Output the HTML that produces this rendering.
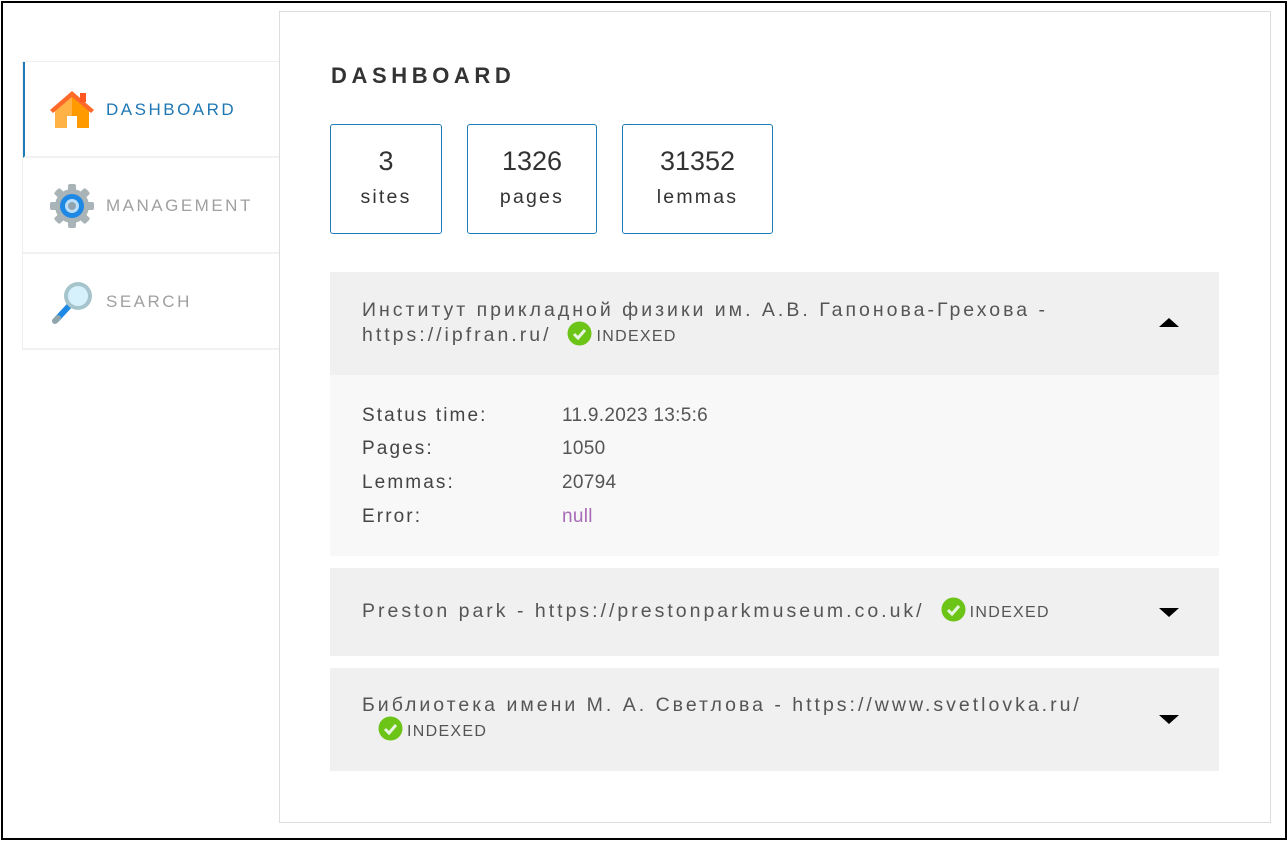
<!DOCTYPE html>
<html><head><meta charset="utf-8"><style>
*{box-sizing:border-box;margin:0;padding:0}
body{width:1288px;height:841px;background:#fff;font-family:"Liberation Sans","Noto Sans CJK SC",sans-serif;position:relative;overflow:hidden;color:#444}
.frame{position:absolute;left:1px;top:1px;width:1286px;height:839px;border:2px solid #000}
.side{position:absolute;left:22px;top:61px;width:257px;height:289px;border:1px solid #eee;border-right:none}
.item{height:96px;border-bottom:2px solid #f2f2f2;display:flex;align-items:center;padding-left:26px;font-size:17px;letter-spacing:2.5px;color:#a0a0a0;white-space:nowrap;padding-top:2px}
.item.act{border-left:2px solid #1f7ab8;color:#1f77b4;padding-left:24px}
.item svg{margin-right:11px}
.panel{position:absolute;left:279px;top:11px;width:992px;height:812px;border:1px solid #ddd}
h1{position:absolute;left:331px;top:63px;font-size:22px;letter-spacing:4.6px;color:#333;font-weight:bold}
.box{position:absolute;top:124px;height:110px;border:1px solid #1f7ab8;border-radius:3px;text-align:center;color:#333}
.box b{display:block;font-weight:normal;font-size:27px;margin-top:21px}
.box span{display:block;font-size:19.5px;margin-top:9px;letter-spacing:2.2px}
.acc{position:absolute;left:330px;width:889px;background:#f0f0f0}
.t{position:absolute;left:32px;font-size:19.5px;letter-spacing:3px;color:#555;line-height:25px;white-space:nowrap}
.ok{display:inline-block;vertical-align:middle;margin:0 4px 0 16px;position:relative;top:-2px}
.ix{font-size:16px;letter-spacing:1.3px;color:#555}
.arr{position:absolute;right:40px;width:0;height:0;border-left:10px solid transparent;border-right:10px solid transparent}
.det{position:absolute;left:330px;top:375px;width:889px;height:181px;background:#f8f8f8;font-size:19px;color:#444;letter-spacing:2.1px}
.det div{position:absolute;left:32px}
.det div span{position:absolute;left:200px;white-space:nowrap;letter-spacing:0.3px;color:#555}
</style></head><body>
<div class="frame"></div>
<div class="side">
<div class="item act"><svg width="46" height="40" viewBox="0 0 46 40"><path d="M6 19 L23 4 L40 19 V38 H6Z" fill="#ffb347"/><path d="M23 4 L40 19 V38 H23Z" fill="#ff9a00"/><path d="M1 20 L23 1 L45 20 L42 23 L23 7 L4 23Z" fill="#ff6a2a"/><rect x="31" y="3" width="6" height="9" fill="#ff5722"/><rect x="18" y="26" width="10" height="12" fill="#fff"/></svg>DASHBOARD</div>
<div class="item"><svg width="46" height="46" viewBox="0 0 46 46"><g fill="#a9b4b8"><circle cx="23" cy="23" r="17"/><rect x="19" y="1" width="8" height="44" rx="2"/><rect x="1" y="19" width="44" height="8" rx="2"/><rect x="19" y="1" width="8" height="44" rx="2" transform="rotate(45 23 23)"/><rect x="19" y="1" width="8" height="44" rx="2" transform="rotate(-45 23 23)"/></g><circle cx="23" cy="23" r="12" fill="#1e88e5"/><circle cx="23" cy="23" r="7" fill="#bbdefb"/><circle cx="23" cy="23" r="4" fill="#90a4ae"/></svg>MANAGEMENT</div>
<div class="item"><svg width="46" height="46" viewBox="0 0 46 46"><line x1="8" y1="40" x2="20" y2="27" stroke="#1e88e5" stroke-width="6" stroke-linecap="round"/><line x1="6" y1="42" x2="9" y2="39" stroke="#90a4ae" stroke-width="6" stroke-linecap="round"/><circle cx="29" cy="17" r="14" fill="#a6c4cc"/><circle cx="29" cy="17" r="10" fill="#d6f1fb"/></svg>SEARCH</div>
</div>
<div class="panel"></div>
<h1>DASHBOARD</h1>
<div class="box" style="left:330px;width:112px"><b>3</b><span>sites</span></div>
<div class="box" style="left:467px;width:130px"><b>1326</b><span>pages</span></div>
<div class="box" style="left:622px;width:151px"><b>31352</b><span>lemmas</span></div>

<div class="acc" style="top:272px;height:103px">
<div class="t" style="top:26px">Институт прикладной физики им. А.В. Гапонова-Грехова -<br>https://ipfran.ru/<svg class="ok" width="25" height="25" viewBox="0 0 25 25"><circle cx="12.5" cy="12.5" r="12" fill="#6cc417"/><path d="M7 13 L11 17 L18 9" stroke="#e8f5e0" stroke-width="3" fill="none"/></svg><span class="ix">INDEXED</span></div>
<div class="arr" style="top:46px;border-bottom:9px solid #000"></div>
</div>
<div class="det">
<div style="top:30px">Status time:<span>11.9.2023 13:5:6</span></div>
<div style="top:63px">Pages:<span>1050</span></div>
<div style="top:97px">Lemmas:<span>20794</span></div>
<div style="top:131px">Error:<span style="color:#a86bb5">null</span></div>
</div>

<div class="acc" style="top:568px;height:88px">
<div class="t" style="top:31px">Preston park - https://prestonparkmuseum.co.uk/<svg class="ok" width="25" height="25" viewBox="0 0 25 25"><circle cx="12.5" cy="12.5" r="12" fill="#6cc417"/><path d="M7 13 L11 17 L18 9" stroke="#e8f5e0" stroke-width="3" fill="none"/></svg><span class="ix">INDEXED</span></div>
<div class="arr" style="top:40px;border-top:9px solid #000"></div>
</div>

<div class="acc" style="top:668px;height:103px">
<div class="t" style="top:25px">Библиотека имени М. А. Светлова - https://www.svetlovka.ru/<br><svg class="ok" width="25" height="25" viewBox="0 0 25 25"><circle cx="12.5" cy="12.5" r="12" fill="#6cc417"/><path d="M7 13 L11 17 L18 9" stroke="#e8f5e0" stroke-width="3" fill="none"/></svg><span class="ix">INDEXED</span></div>
<div class="arr" style="top:47px;border-top:9px solid #000"></div>
</div>
</body></html>
